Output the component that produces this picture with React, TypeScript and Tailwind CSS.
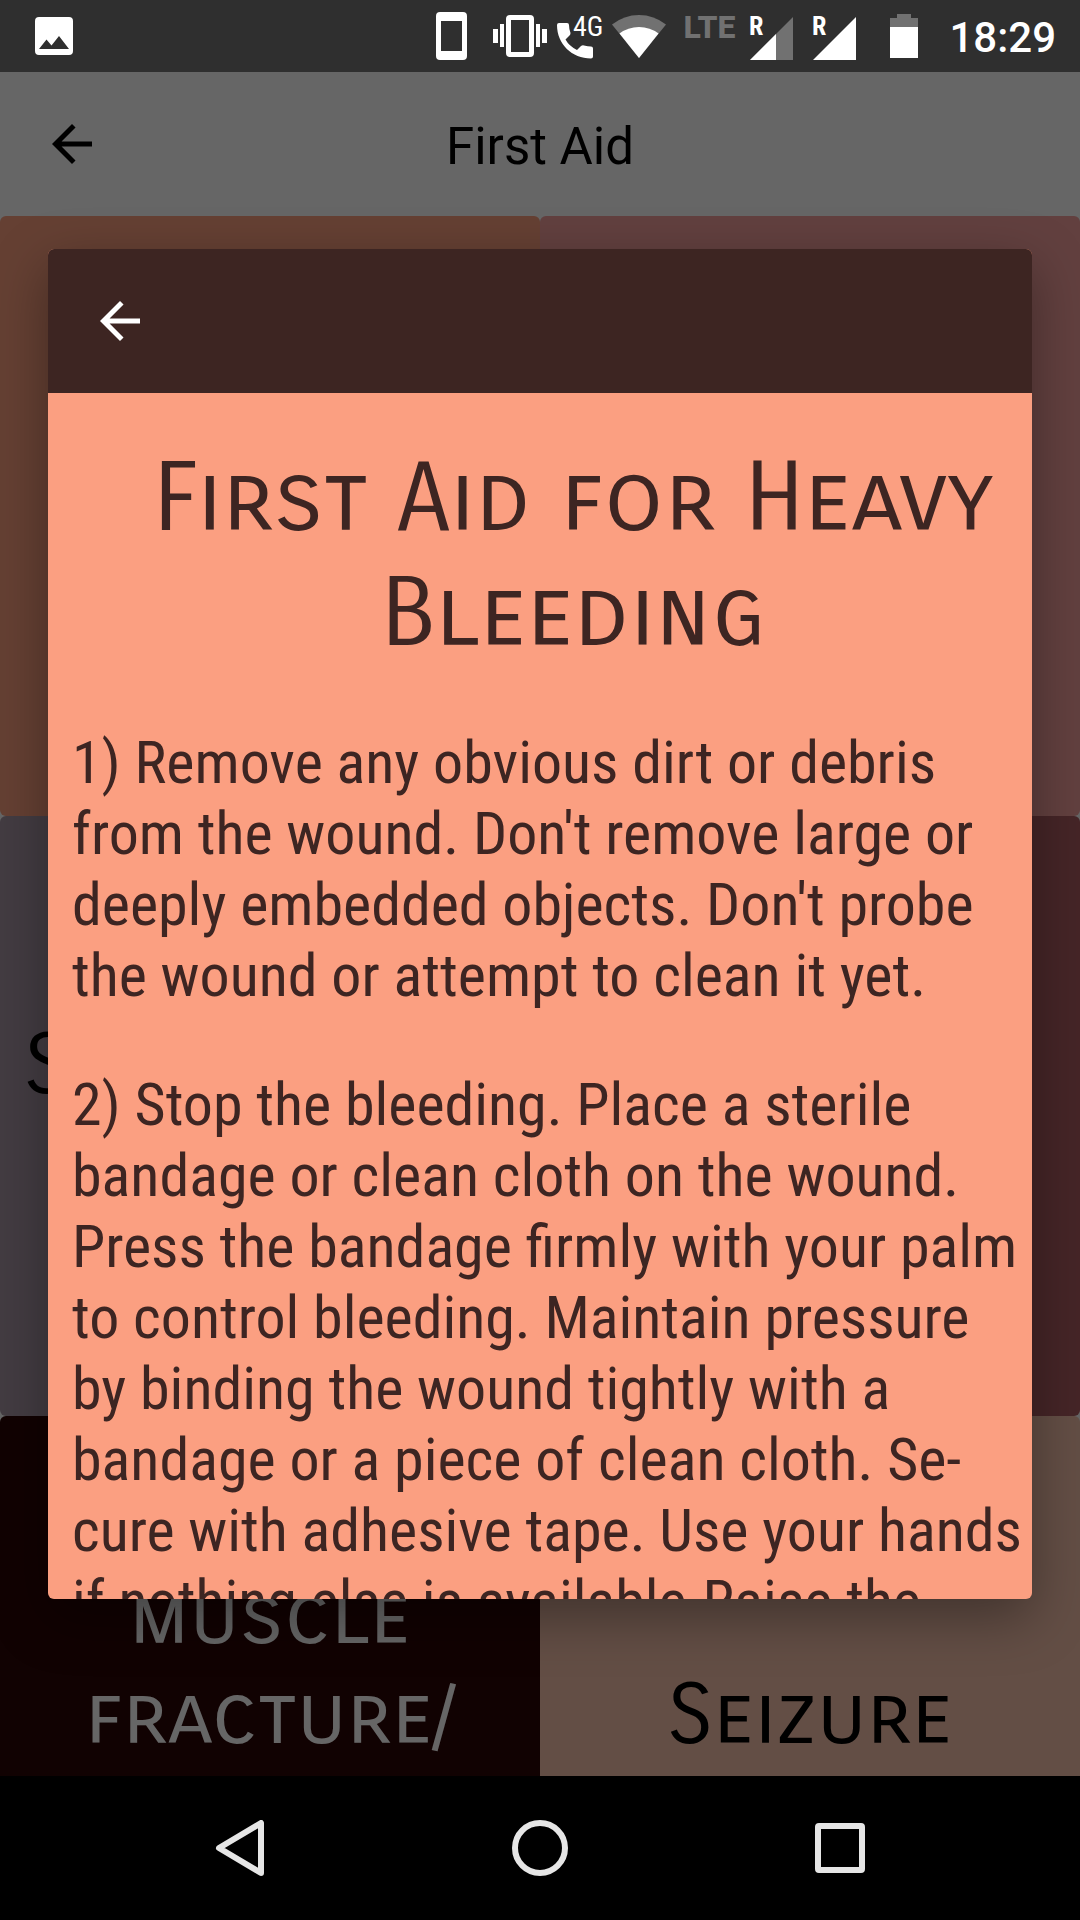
import type { ReactNode } from "react";

const bodyLines = [
  [
    "1) Remove any obvious dirt or debris",
    "from the wound. Don't remove large or",
    "deeply embedded objects. Don't probe",
    "the wound or attempt to clean it yet.",
  ],
  [
    "2) Stop the bleeding. Place a sterile",
    "bandage or clean cloth on the wound.",
    "Press the bandage firmly with your palm",
    "to control bleeding. Maintain pressure",
    "by binding the wound tightly with a",
    "bandage or a piece of clean cloth. Se-",
    "cure with adhesive tape. Use your hands",
    "if nothing else is available.Raise the",
  ],
];

function ArrowBack() {
  return (
    <svg viewBox="0 0 24 24" className="size-[60px]" fill="currentColor" aria-hidden="true">
      <path d="M20 11H7.83l5.59-5.59L12 4l-8 8 8 8 1.41-1.41L7.83 13H20z" />
    </svg>
  );
}

function Signal({ partial }: { partial?: boolean }) {
  return (
    <svg viewBox="0 0 43 43" className="size-[43px] overflow-visible" aria-hidden="true">
      <path d="M43 0v43H0z" fill={partial ? "#717171" : "#fff"} />
      {partial && <path d="M26 17v26H0z" fill="#fff" />}
      <text x="-1" y="18" fontFamily="Roboto Condensed, Roboto, sans-serif" fontWeight="700" fontSize="26" fill="#fff">
        R
      </text>
    </svg>
  );
}

function StatusBar() {
  return (
    <div className="flex h-[72px] shrink-0 items-center bg-[#2f2f2f] pr-6 pl-[35px] text-white">
      <svg viewBox="0 0 38 38" className="size-[38px]" aria-hidden="true">
        <path
          fillRule="evenodd"
          fill="#fff"
          d="M4 0h30a4 4 0 0 1 4 4v30a4 4 0 0 1-4 4H4a4 4 0 0 1-4-4V4a4 4 0 0 1 4-4zM4 32h30L24 19l-7.500 9.500L11.500 22.500z"
        />
      </svg>
      <svg viewBox="0 0 31 48" className="ml-auto h-12 w-[31px]" aria-hidden="true">
        <path
          fillRule="evenodd"
          fill="#fff"
          d="M4 0h23a4 4 0 0 1 4 4v40a4 4 0 0 1-4 4H4a4 4 0 0 1-4-4V4a4 4 0 0 1 4-4zM5 9v30h21V9z"
        />
      </svg>
      <svg viewBox="0 0 54 42" className="ml-[26px] h-[42px] w-[54px]" fill="#fff" aria-hidden="true">
        <path fillRule="evenodd" d="M17 0h20a4 4 0 0 1 4 4v34a4 4 0 0 1-4 4H17a4 4 0 0 1-4-4V4a4 4 0 0 1 4-4zM18 5v32h18V5z" />
        <path d="M0 14h5v14H0zM7 9h4v23H7zM43 9h4v23h-4zM49 14h5v14h-5z" />
      </svg>
      <svg viewBox="0 0 45 44" className="mt-1 ml-[10px] h-11 w-[45px] overflow-visible" fill="#fff" aria-hidden="true">
        <path d="M2 7h8q2 0 2 2 0 4 1.500 8 0 1.500-1 2.500l-4 4Q12 30 20 34l4-4q1.500-1 3-.5 4 1 7 1 2 0 2 2v8q0 2-2 2C15 42.500 0 28 0 9q0-2 2-2z" />
        <text x="16" y="20" fontFamily="Roboto Condensed, Roboto, sans-serif" fontSize="28">
          4G
        </text>
      </svg>
      <svg viewBox="0 0 54 43" className="ml-[10px] h-[43px] w-[54px]" aria-hidden="true">
        <path d="M27 43L0 9.500Q12 0 27 0t27 9.500z" fill="#717171" />
        <path d="M27 43L7.500 18.500Q16 12 27 12t19.500 6.500z" fill="#fff" />
      </svg>
      <span className="ml-[18px] pb-[18px] font-['Roboto'] text-[32px] leading-[32px] font-extrabold text-[#717171]">LTE</span>
      <div className="mt-1 ml-[15px] flex gap-5">
        <Signal partial />
        <Signal />
      </div>
      <svg viewBox="0 0 28 44" className="ml-[34px] h-11 w-7" aria-hidden="true">
        <path d="M7 0h14v4h7v10H0V4h7z" fill="#717171" />
        <path d="M0 13h28v31H0z" fill="#fff" />
      </svg>
      <time className="ml-[31px] pt-1 font-['Roboto'] text-[42px] leading-[50px] font-medium">18:29</time>
    </div>
  );
}

function Tile({ className, children }: { className: string; children?: ReactNode }) {
  return (
    <button type="button" className={`flex h-[600px] items-center rounded-md ${className}`}>
      {children}
    </button>
  );
}

function FirstAidPage() {
  return (
    <div className="flex h-full flex-col overflow-hidden bg-white font-['Carrois_Gothic_SC'] text-[84px] leading-[100px]">
      <header className="grid h-36 shrink-0 grid-cols-[60px_1fr_60px] items-center px-[42px]">
        <button type="button" aria-label="Back">
          <ArrowBack />
        </button>
        <h1 className="pt-1.5 text-center font-['Roboto'] text-[51px] leading-[60px]">First Aid</h1>
      </header>
      <div className="grid grid-cols-2">
        <Tile className="bg-[#fca080]" />
        <Tile className="bg-[#f5a09d]" />
        <Tile className="justify-start bg-[#a896a5] pb-[100px] pl-6">S</Tile>
        <Tile className="bg-[#ac5c62]" />
        <Tile className="justify-center bg-[#2b0505] pb-[100px] text-white">
          <span>
            muscle
            <br />
            fracture/
          </span>
        </Tile>
        <Tile className="justify-center bg-[#f8c3ad]">Seizure</Tile>
      </div>
    </div>
  );
}

function Dialog() {
  return (
    <section
      role="dialog"
      aria-modal="true"
      aria-labelledby="dialog-title"
      className="flex h-full w-full flex-col overflow-hidden rounded-md bg-[#fb9f81] text-[#3d2522] shadow-[0_18px_54px_rgba(0,0,0,0.35)]"
    >
      <header className="flex h-36 shrink-0 items-center bg-[#3d2522] px-[42px] text-white">
        <button type="button" aria-label="Close">
          <ArrowBack />
        </button>
      </header>
      <div className="min-h-0 flex-1 overflow-hidden">
        <h2
          id="dialog-title"
          className="pt-12 pl-[67px] text-center font-['Carrois_Gothic_SC'] text-[96px] leading-[115px]"
        >
          First Aid for Heavy
          <br />
          Bleeding
        </h2>
        <div className="mt-14 flex flex-col gap-[58px] pl-6 font-['Roboto_Condensed'] text-[60px] leading-[71px] whitespace-nowrap">
          {bodyLines.map((lines) => (
            <p key={lines[0]}>
              {lines.map((line) => (
                <span key={line} className="block">
                  {line}
                </span>
              ))}
            </p>
          ))}
        </div>
      </div>
    </section>
  );
}

function NavBar() {
  return (
    <nav className="flex h-36 shrink-0 items-center bg-black px-[90px] text-[#e6e6e6]">
      <button type="button" aria-label="Back" className="flex flex-1 justify-center">
        <svg viewBox="0 0 56 56" className="size-14" fill="none" stroke="currentColor" strokeWidth="6" strokeLinejoin="round" aria-hidden="true">
          <path d="M7 28L49 3v50z" />
        </svg>
      </button>
      <button type="button" aria-label="Home" className="flex flex-1 justify-center">
        <svg viewBox="0 0 56 56" className="size-14" fill="none" stroke="currentColor" strokeWidth="6" aria-hidden="true">
          <circle cx="28" cy="28" r="25" />
        </svg>
      </button>
      <button type="button" aria-label="Recent apps" className="flex flex-1 justify-center">
        <svg viewBox="0 0 56 56" className="size-14" fill="none" stroke="currentColor" strokeWidth="6" aria-hidden="true">
          <rect x="6" y="6" width="44" height="44" rx="1" />
        </svg>
      </button>
    </nav>
  );
}

export default function App() {
  return (
    <div className="flex h-screen flex-col">
      <StatusBar />
      <main className="relative min-h-0 flex-1 overflow-hidden">
        <FirstAidPage />
        <div className="absolute inset-0 bg-black/60 px-12 py-[177px]">
          <Dialog />
        </div>
      </main>
      <NavBar />
    </div>
  );
}
